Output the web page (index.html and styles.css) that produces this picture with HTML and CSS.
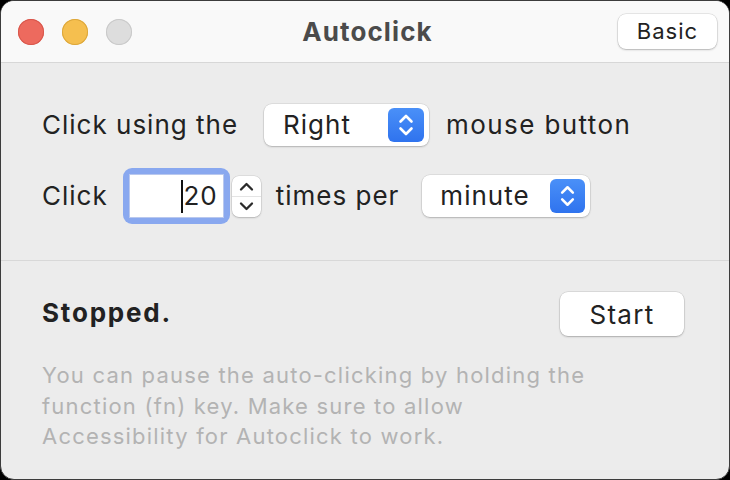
FILE: index.html
```html
<!DOCTYPE html>
<html lang="en">
<head>
<meta charset="utf-8">
<title>Autoclick</title>
<link rel="stylesheet" href="styles.css">
</head>
<body>
<div class="window">
  <header class="titlebar">
    <div class="lights">
      <span class="light red"></span>
      <span class="light yellow"></span>
      <span class="light grey"></span>
    </div>
    <h1 class="title">Autoclick</h1>
    <div class="tb-right">
      <button class="btn basic">Basic</button>
    </div>
  </header>

  <section class="settings">
    <div class="row row1">
      <span class="label">Click using the</span>
      <div class="popup popup-right">
        <span class="popup-text">Right</span>
        <span class="popup-arrows">
          <svg viewBox="0 0 36 34" width="36" height="34"><path d="M12.5 13.5 L18 8 L23.5 13.5 M12.5 20.5 L18 26 L23.5 20.5" fill="none" stroke="#fff" stroke-width="2.6" stroke-linecap="round" stroke-linejoin="round"/></svg>
        </span>
      </div>
      <span class="label after-popup">mouse button</span>
    </div>
    <div class="row row2">
      <span class="label">Click</span>
      <div class="focus-ring">
        <div class="field"><span class="caret"></span><span class="field-val">20</span></div>
      </div>
      <div class="stepper">
        <span class="step step-up"><svg viewBox="0 0 29 20" width="29" height="20"><path d="M9 13.5 L14.5 8 L20 13.5" fill="none" stroke="#2b2b2b" stroke-width="2.3" stroke-linecap="round" stroke-linejoin="round"/></svg></span>
        <span class="step step-down"><svg viewBox="0 0 29 20" width="29" height="20"><path d="M9 6.5 L14.5 12 L20 6.5" fill="none" stroke="#2b2b2b" stroke-width="2.3" stroke-linecap="round" stroke-linejoin="round"/></svg></span>
      </div>
      <span class="label after-stepper">times per</span>
      <div class="popup popup-minute">
        <span class="popup-text">minute</span>
        <span class="popup-arrows">
          <svg viewBox="0 0 36 34" width="35" height="34"><path d="M12.5 13.5 L18 8 L23.5 13.5 M12.5 20.5 L18 26 L23.5 20.5" fill="none" stroke="#fff" stroke-width="2.6" stroke-linecap="round" stroke-linejoin="round"/></svg>
        </span>
      </div>
    </div>
  </section>

  <section class="status">
    <div class="status-row">
      <strong class="state">Stopped.</strong>
      <button class="btn start">Start</button>
    </div>
    <p class="help">You can pause the auto-clicking by holding the<br>function (fn) key. Make sure to allow<br>Accessibility for Autoclick to work.</p>
  </section>
</div>
</body>
</html>
```
FILE: styles.css
```css
* { box-sizing: border-box; }

html, body {
  margin: 0;
  padding: 0;
  background: #000;
}

body {
  width: 730px;
  height: 480px;
  font-family: "Inter", "Roboto", "Liberation Sans", sans-serif;
  color: #222;
}

.window {
  width: 730px;
  height: 480px;
  border: 1px solid #3c3c3c;
  border-radius: 14px;
  background: #ececec;
  overflow: hidden;
  display: flex;
  flex-direction: column;
}

/* title bar */
.titlebar {
  height: 62px;
  flex: none;
  background: #f9f9f9;
  border-bottom: 1px solid #d7d7d7;
  display: grid;
  grid-template-columns: 1fr auto 1fr;
  align-items: center;
  padding: 0 12px 0 17px;
}

.lights {
  display: flex;
  gap: 18px;
  align-items: center;
  padding-top: 1px;
}

.light {
  width: 26px;
  height: 26px;
  border-radius: 50%;
  display: block;
}

.light.red { background: #ed6a5e; box-shadow: inset 0 0 0 1px #d8574c; }
.light.yellow { background: #f5bf4f; box-shadow: inset 0 0 0 1px #dca73b; }
.light.grey { background: #dddddd; box-shadow: inset 0 0 0 1px #c9c9c9; }

.title {
  margin: 0;
  font-size: 26px;
  font-weight: 700;
  color: #4b4b4b;
  letter-spacing: 1.1px;
}

.tb-right {
  display: flex;
  justify-content: flex-end;
}

.btn {
  font-family: inherit;
  background: #fff;
  border: none;
  border-radius: 8px;
  box-shadow: 0 0 0 0.5px rgba(0, 0, 0, 0.14), 0 1px 2px rgba(0, 0, 0, 0.22);
  color: #222;
  padding: 0;
}

.basic {
  width: 99px;
  height: 35px;
  font-size: 22px;
  letter-spacing: 1px;
  margin-top: -1px;
}

/* settings */
.settings {
  flex: none;
  padding: 41px 0 36px 41px;
  border-bottom: 1px solid #d8d8d8;
  display: flex;
  flex-direction: column;
  gap: 22px;
}

.row {
  display: flex;
  align-items: center;
}

.row1 { height: 42px; }
.row2 { height: 56px; }

.label {
  font-size: 26px;
  letter-spacing: 1px;
  white-space: nowrap;
  margin-top: -2px;
}

.popup {
  background: #fff;
  border-radius: 8px;
  box-shadow: 0 0 0 0.5px rgba(0, 0, 0, 0.12), 0 1px 2px rgba(0, 0, 0, 0.2);
  height: 42px;
  display: flex;
  align-items: center;
  justify-content: space-between;
  padding: 0 5px 0 19px;
}

.popup-right { width: 165px; margin-left: 26px; }
.popup-minute { width: 168px; height: 42px; margin-left: 23px; padding-left: 18px; }

.popup-text { font-size: 26px; letter-spacing: 1px; margin-top: -2px; }

.popup-arrows {
  width: 36px;
  height: 34px;
  border-radius: 6px;
  background: linear-gradient(#4a90f8, #2f73ee);
  display: flex;
  align-items: center;
  justify-content: center;
}
.popup-minute .popup-arrows { width: 35px; }
.popup-arrows svg { display: block; }

.after-popup { margin-left: 17px; letter-spacing: 1.4px; }

.focus-ring {
  margin-left: 15px;
  width: 107px;
  height: 56px;
  padding: 6px;
  border-radius: 9px;
  background: #89a8ef;
}

.field {
  width: 95px;
  height: 44px;
  background: #fff;
  border: 1px solid #b9c8ee;
  display: flex;
  align-items: center;
  justify-content: flex-end;
  padding-right: 5px;
}

.caret {
  width: 2px;
  height: 33px;
  background: #111;
  margin-right: 0;
}

.field-val { font-size: 26px; letter-spacing: 1px; color: #222; margin-top: -2px; }

.stepper {
  margin-left: 2px;
  width: 29px;
  height: 41px;
  background: #fff;
  border-radius: 7px;
  box-shadow: 0 0 0 0.5px rgba(0, 0, 0, 0.12), 0 1px 2px rgba(0, 0, 0, 0.18);
  display: flex;
  flex-direction: column;
}

.step {
  flex: 1;
  display: flex;
  align-items: center;
  justify-content: center;
}
.step-up { border-bottom: 1px solid #e4e4e4; }
.step svg { display: block; }

.after-stepper { margin-left: 15px; }

/* status */
.status {
  flex: 1;
  padding: 31px 45px 0 41px;
}

.status-row {
  display: flex;
  align-items: center;
  justify-content: space-between;
  height: 44px;
}

.state {
  font-size: 26px;
  font-weight: 700;
  letter-spacing: 1.8px;
  margin-top: -4px;
}

.start {
  width: 124px;
  height: 44px;
  font-size: 26px;
  letter-spacing: 1.3px;
}

.help {
  margin: 24px 0 0;
  font-size: 22px;
  letter-spacing: 1.2px;
  line-height: 30.5px;
  color: #b3b3b3;
}
```
